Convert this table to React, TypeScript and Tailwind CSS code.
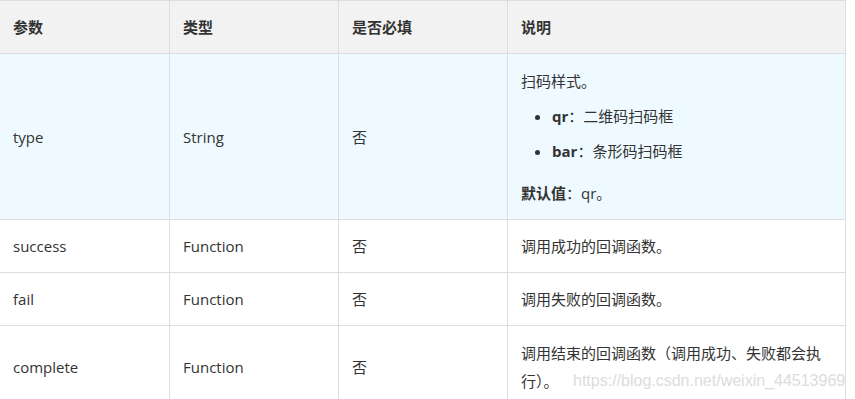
import React from 'react';

type Row = {
  name: string;
  type: string;
  required: string;
  desc: React.ReactNode;
  height: string;
  tint?: boolean;
};

const rows: Row[] = [
  {
    name: 'type',
    type: 'String',
    required: '否',
    tint: true,
    height: 'h-[166px]',
    desc: (
      <div className="py-[11px]">
        <p>扫码样式。</p>
        <ul className="list-disc pl-[31px] my-[7px]">
          <li>
            <strong>qr</strong>：二维码扫码框
          </li>
          <li className="mt-[7px]">
            <strong>bar</strong>：条形码扫码框
          </li>
        </ul>
        <p className="mt-[14px]">
          <strong>默认值</strong>：qr。
        </p>
      </div>
    ),
  },
  { name: 'success', type: 'Function', required: '否', height: 'h-[53px]', desc: '调用成功的回调函数。' },
  { name: 'fail', type: 'Function', required: '否', height: 'h-[53px]', desc: '调用失败的回调函数。' },
  {
    name: 'complete',
    type: 'Function',
    required: '否',
    height: 'h-[82px]',
    desc: '调用结束的回调函数（调用成功、失败都会执行）。',
  },
];

const cell = 'border border-[#dddddd] pl-[13px] pr-[13px] align-middle';

export default function App() {
  return (
    <div
      className="relative w-[855px] h-[399px] overflow-hidden bg-white text-[#333333] text-[15px] leading-[28px]"
      style={{ fontFamily: '"Open Sans", "Noto Sans CJK SC", sans-serif' }}
    >
      <table className="-ml-px w-[847px] border-collapse table-fixed">
        <colgroup>
          <col className="w-[170px]" />
          <col className="w-[169px]" />
          <col className="w-[169px]" />
          <col />
        </colgroup>
        <thead>
          <tr className="bg-[#f2f2f2] h-[53px]">
            <th className={`${cell} text-left font-bold`}>参数</th>
            <th className={`${cell} text-left font-bold`}>类型</th>
            <th className={`${cell} text-left font-bold`}>是否必填</th>
            <th className={`${cell} text-left font-bold`}>说明</th>
          </tr>
        </thead>
        <tbody>
          {rows.map((r) => (
            <tr key={r.name} className={`${r.height} ${r.tint ? 'bg-[#eefaff]' : 'bg-white'}`}>
              <td className={cell}>{r.name}</td>
              <td className={cell}>{r.type}</td>
              <td className={cell}>{r.required}</td>
              <td className={cell}>{r.desc}</td>
            </tr>
          ))}
        </tbody>
      </table>

      {/* csdn watermark */}
      <div
        className="absolute left-[573px] top-[371px] text-[16px] leading-[20px] text-[#dcdcdc] whitespace-nowrap"
        style={{ fontFamily: '"Liberation Sans", Arial, sans-serif' }}
      >
        https://blog.csdn.net/weixin_44513969
      </div>
    </div>
  );
}
